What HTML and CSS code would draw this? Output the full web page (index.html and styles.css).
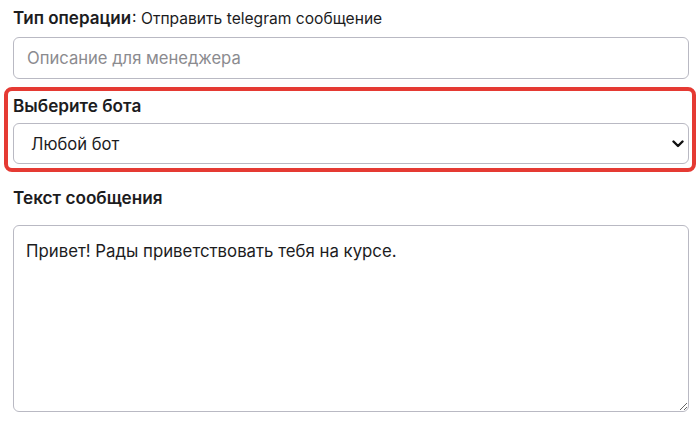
FILE: index.html
```html
<!DOCTYPE html>
<html lang="ru">
<head>
<meta charset="utf-8">
<link rel="stylesheet" href="styles.css">
</head>
<body>
<div class="form">
  <div class="op-type"><span class="strong">Тип операции</span>: Отправить telegram сообщение</div>
  <input class="field" type="text" placeholder="Описание для менеджера">
  <div class="highlight">
    <div class="label">Выберите бота</div>
    <div class="select-wrap">
      <select class="field select">
        <option>Любой бот</option>
      </select>
      <svg class="chevron" width="12" height="8" viewBox="0 0 12 8"><path d="M1.5 1.5 L6 6 L10.5 1.5" fill="none" stroke="#111" stroke-width="2.4" stroke-linecap="round" stroke-linejoin="round"/></svg>
    </div>
  </div>
  <div class="label msg-label">Текст сообщения</div>
  <textarea class="field area">Привет! Рады приветствовать тебя на курсе.</textarea>
</div>
</body>
</html>
```
FILE: styles.css
```css
* { box-sizing: border-box; }
html, body { margin: 0; padding: 0; background: #fff; }
body {
  font-family: Inter, "Noto Sans", sans-serif;
  color: #1c1c1e;
  font-size: 16.6px;
}
.form {
  display: flex;
  flex-direction: column;
  padding: 6px 11px 0 13px;
}
.op-type {
  font-size: 15.6px;
  line-height: 24px;
  height: 24px;
  white-space: nowrap;
}
.strong { font-weight: 600; font-size: 17px; margin-right: 1px; }
.label { font-weight: 600; font-size: 17.2px; }
.field {
  font-family: inherit;
  font-size: 16.6px;
  color: #1c1c1e;
  border: 1px solid #b9b9c3;
  border-radius: 6px;
  background: #fff;
  outline: none;
  width: 100%;
  margin: 0;
}
input.field {
  margin-top: 7px;
  height: 42px;
  padding: 0 13px;
}
input.field::placeholder { color: #8b8b8f; }
.highlight {
  margin: 8px -7px 0 -9px;
  border: 4px solid #e53a33;
  border-radius: 8px;
  padding: 3px 3px 4px 5px;
  display: flex;
  flex-direction: column;
}
.label { line-height: 24px; height: 24px; }
.select-wrap { position: relative; margin-top: 5px; }
.select {
  appearance: none;
  -webkit-appearance: none;
  height: 41px;
  padding: 0 40px 0 17px;
  display: block;
}
.chevron {
  position: absolute;
  right: 5px;
  top: 17px;
}
.msg-label { margin-top: 14px; }
.area {
  margin-top: 15px;
  height: 187px;
  padding: 13px 12px;
  resize: both;
  font-size: 16.8px;
  line-height: 24px;
  display: block;
}
```
